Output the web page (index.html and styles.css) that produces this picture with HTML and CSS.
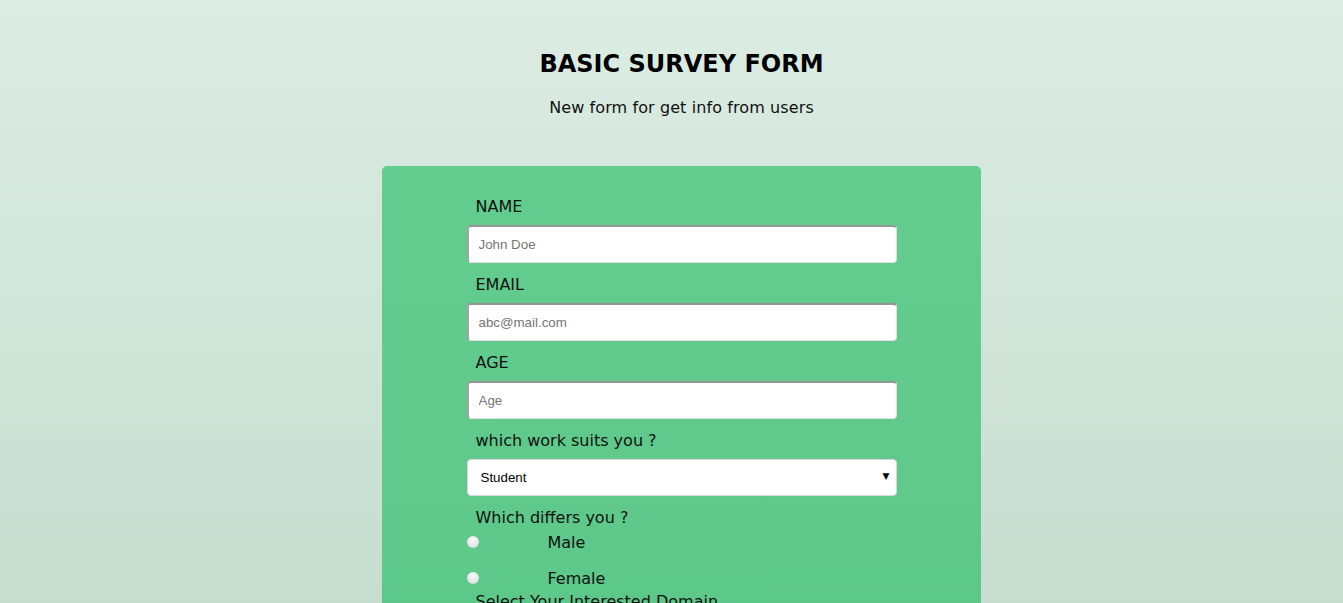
FILE: index.html
```html
<!DOCTYPE html>
<html lang="en">
<head>
<meta charset="utf-8">
<title>Basic Survey Form</title>
<link rel="stylesheet" href="styles.css">
</head>
<body>
<header class="header">
  <h1 class="title">BASIC SURVEY FORM</h1>
  <p class="subtitle">New form for get info from users</p>
</header>
<form class="survey">
  <div class="fields">
    <label class="label" for="name">NAME</label>
    <input class="input" id="name" type="text" placeholder="John Doe">
    <label class="label" for="email">EMAIL</label>
    <input class="input" id="email" type="email" placeholder="abc@mail.com">
    <label class="label" for="age">AGE</label>
    <input class="input" id="age" type="number" placeholder="Age">
    <label class="label" for="work">which work suits you ?</label>
    <div class="select-wrap">
      <select class="select" id="work">
        <option>Student</option>
        <option>Professional</option>
      </select>
      <span class="caret">▼</span>
    </div>
    <p class="label">Which differs you ?</p>
    <div class="radio-row"><span class="radio"></span><span class="radio-text">Male</span></div>
    <div class="radio-row"><span class="radio"></span><span class="radio-text">Female</span></div>
    <p class="label domain">Select Your Interested Domain</p>
  </div>
</form>
</body>
</html>
```
FILE: styles.css
```css
html {
  height: 100%;
}
body {
  margin: 0;
  padding-left: 20px;
  min-height: 100%;
  background: linear-gradient(to bottom, #dcede3 0%, #c7ddd0 100%);
  font-family: "DejaVu Sans", Verdana, sans-serif;
  color: #111;
  overflow: hidden;
}
.header {
  text-align: center;
  padding-top: 49px;
}
.title {
  margin: 0;
  font-size: 24px;
  line-height: 30px;
  font-weight: bold;
  color: #000;
}
.subtitle {
  margin: 19px 0 0;
  font-size: 16px;
  line-height: 20px;
  letter-spacing: 0.1px;
  color: #111;
}
.survey {
  width: 599px;
  margin: 48px auto 0;
  background: linear-gradient(to bottom, #63cd90 0%, #5ac686 100%);
  border-radius: 5px;
  height: 600px;
}
.fields {
  width: 430px;
  margin: 0 auto;
  padding-top: 31px;
  display: flex;
  flex-direction: column;
}
.label {
  display: block;
  padding-left: 9px;
  font-size: 16px;
  line-height: 20px;
  height: 20px;
  margin: 0 0 8px;
  color: #111;
}
.input {
  box-sizing: border-box;
  width: 430px;
  height: 38px;
  margin: 0 0 12px;
  padding: 0 10px;
  border: none;
  border-top: 2px solid #959595;
  border-left: 2px solid #a5a5a5;
  border-right: 1px solid #e0e0e0;
  border-bottom: 1px solid #e0e0e0;
  border-radius: 4px;
  background: #fff;
  font-family: "Liberation Sans", Arial, sans-serif;
  font-size: 13.33px;
  outline: none;
}
.input::placeholder {
  color: #757575;
}
.select-wrap {
  position: relative;
  margin: 0 0 12px;
}
.select {
  box-sizing: border-box;
  width: 430px;
  height: 37px;
  padding: 0 13px;
  border: 1px solid #d8d8d8;
  border-radius: 4px;
  background: #fff;
  font-family: "Liberation Sans", Arial, sans-serif;
  font-size: 13.33px;
  color: #000;
  appearance: none;
  -webkit-appearance: none;
}
.caret {
  position: absolute;
  right: 7px;
  top: 12px;
  font-size: 9px;
  color: #000;
  pointer-events: none;
}
.radio-row {
  display: flex;
  align-items: center;
  height: 20px;
  margin: -3px 0 19px;
}
.radio {
  width: 12px;
  height: 12px;
  border-radius: 50%;
  background: radial-gradient(circle at 50% 35%, #fafafa 0%, #e6e6e6 60%, #cfcfcf 100%);
  margin-right: 69px;
  margin-top: -2px;
}
.radio-text {
  font-size: 16px;
  line-height: 20px;
}
.domain {
  margin-top: -16px;
}
```
